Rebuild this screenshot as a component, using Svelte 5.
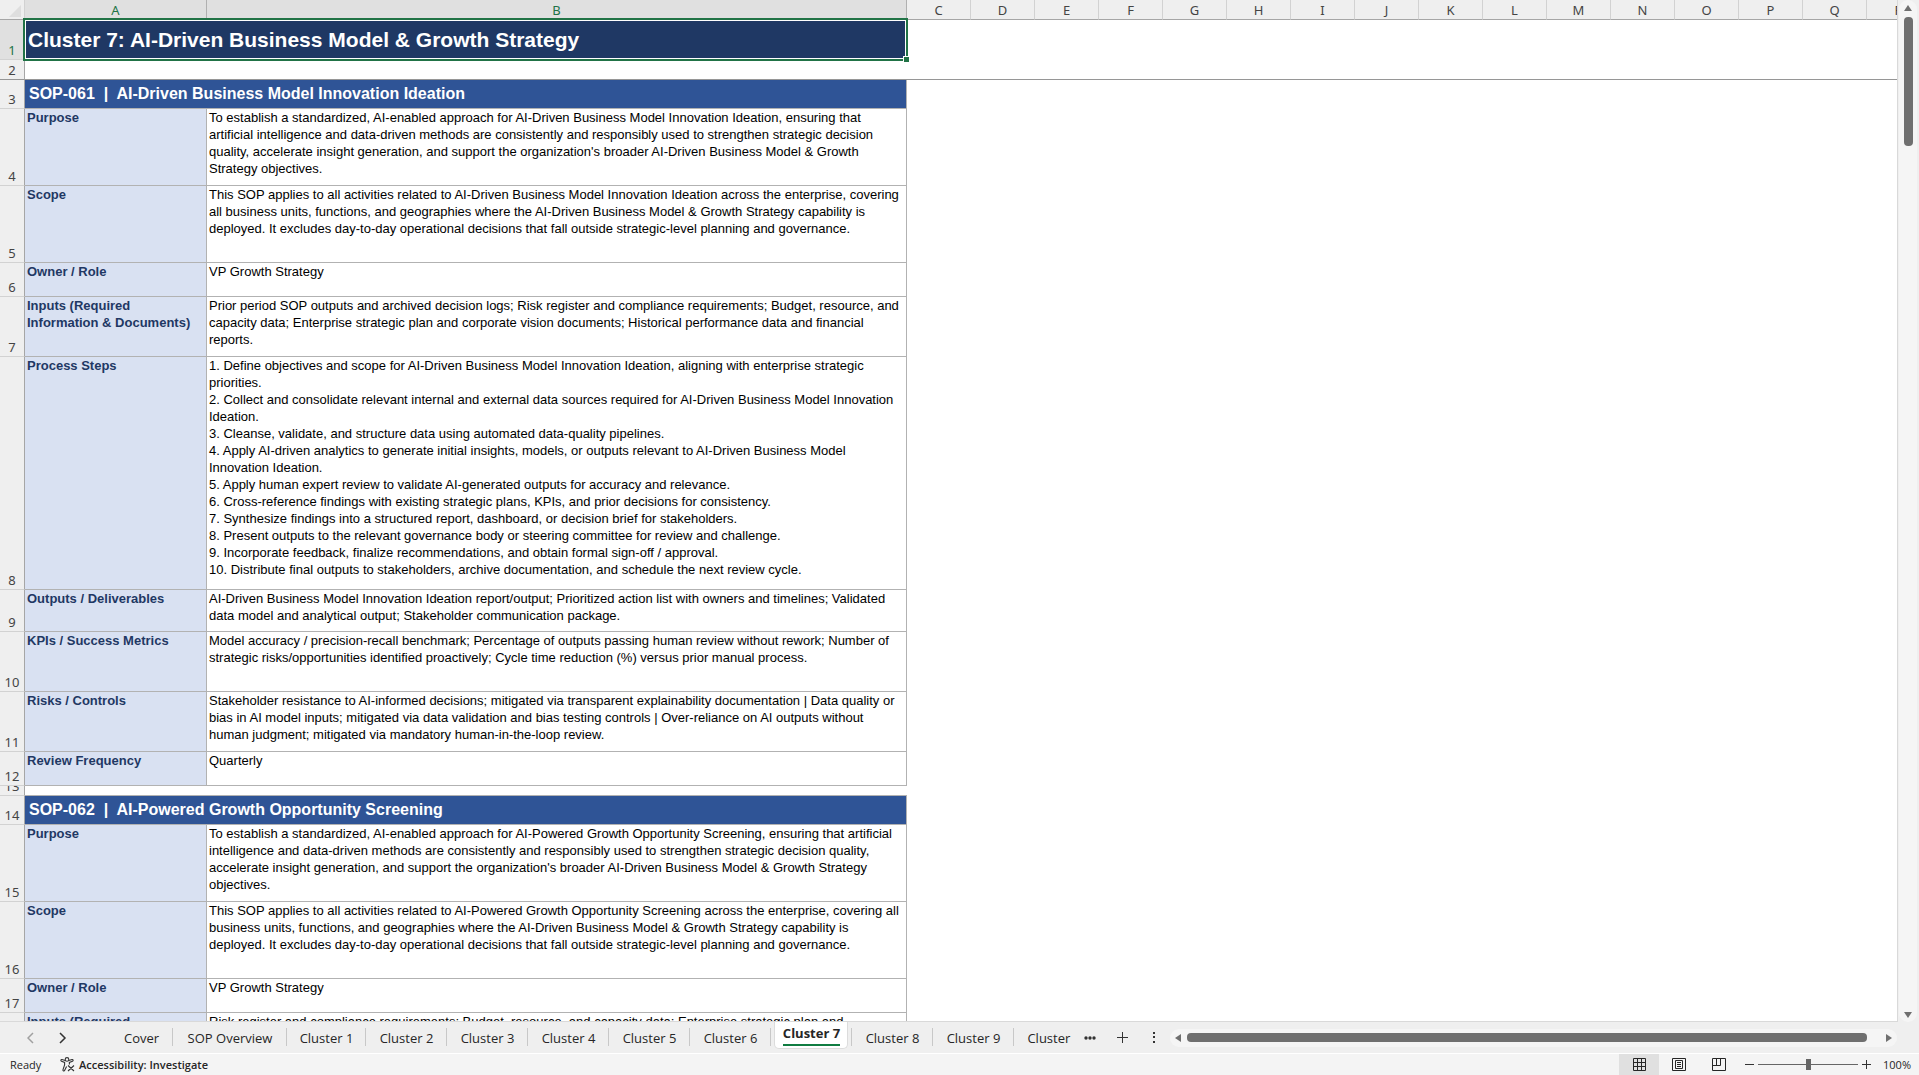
<script lang="ts">
	type Row = {
		n: number;
		height: number;
		kind: 'title' | 'blank' | 'section' | 'field';
		label?: string;
		text?: string;
	};

	const columns = 'CDEFGHIJKLMNOPQR'.split('');

	const frozen: Row[] = [
		{ n: 1, height: 40, kind: 'title', text: 'Cluster 7: AI-Driven Business Model & Growth Strategy' },
		{ n: 2, height: 20, kind: 'blank' }
	];

	const rows: Row[] = [
		{ n: 3, height: 29, kind: 'section', text: 'SOP-061  |  AI-Driven Business Model Innovation Ideation' },
		{
			n: 4,
			height: 77,
			kind: 'field',
			label: 'Purpose',
			text: `To establish a standardized, AI-enabled approach for AI-Driven Business Model Innovation Ideation, ensuring that
artificial intelligence and data-driven methods are consistently and responsibly used to strengthen strategic decision
quality, accelerate insight generation, and support the organization's broader AI-Driven Business Model & Growth
Strategy objectives.`
		},
		{
			n: 5,
			height: 77,
			kind: 'field',
			label: 'Scope',
			text: `This SOP applies to all activities related to AI-Driven Business Model Innovation Ideation across the enterprise, covering
all business units, functions, and geographies where the AI-Driven Business Model & Growth Strategy capability is
deployed. It excludes day-to-day operational decisions that fall outside strategic-level planning and governance.`
		},
		{ n: 6, height: 34, kind: 'field', label: 'Owner / Role', text: 'VP Growth Strategy' },
		{
			n: 7,
			height: 60,
			kind: 'field',
			label: 'Inputs (Required\nInformation & Documents)',
			text: `Prior period SOP outputs and archived decision logs; Risk register and compliance requirements; Budget, resource, and
capacity data; Enterprise strategic plan and corporate vision documents; Historical performance data and financial
reports.`
		},
		{
			n: 8,
			height: 233,
			kind: 'field',
			label: 'Process Steps',
			text: `1. Define objectives and scope for AI-Driven Business Model Innovation Ideation, aligning with enterprise strategic
priorities.
2. Collect and consolidate relevant internal and external data sources required for AI-Driven Business Model Innovation
Ideation.
3. Cleanse, validate, and structure data using automated data-quality pipelines.
4. Apply AI-driven analytics to generate initial insights, models, or outputs relevant to AI-Driven Business Model
Innovation Ideation.
5. Apply human expert review to validate AI-generated outputs for accuracy and relevance.
6. Cross-reference findings with existing strategic plans, KPIs, and prior decisions for consistency.
7. Synthesize findings into a structured report, dashboard, or decision brief for stakeholders.
8. Present outputs to the relevant governance body or steering committee for review and challenge.
9. Incorporate feedback, finalize recommendations, and obtain formal sign-off / approval.
10. Distribute final outputs to stakeholders, archive documentation, and schedule the next review cycle.`
		},
		{
			n: 9,
			height: 42,
			kind: 'field',
			label: 'Outputs / Deliverables',
			text: `AI-Driven Business Model Innovation Ideation report/output; Prioritized action list with owners and timelines; Validated
data model and analytical output; Stakeholder communication package.`
		},
		{
			n: 10,
			height: 60,
			kind: 'field',
			label: 'KPIs / Success Metrics',
			text: `Model accuracy / precision-recall benchmark; Percentage of outputs passing human review without rework; Number of
strategic risks/opportunities identified proactively; Cycle time reduction (%) versus prior manual process.`
		},
		{
			n: 11,
			height: 60,
			kind: 'field',
			label: 'Risks / Controls',
			text: `Stakeholder resistance to AI-informed decisions; mitigated via transparent explainability documentation | Data quality or
bias in AI model inputs; mitigated via data validation and bias testing controls | Over-reliance on AI outputs without
human judgment; mitigated via mandatory human-in-the-loop review.`
		},
		{ n: 12, height: 34, kind: 'field', label: 'Review Frequency', text: 'Quarterly' },
		{ n: 13, height: 10, kind: 'blank' },
		{ n: 14, height: 29, kind: 'section', text: 'SOP-062  |  AI-Powered Growth Opportunity Screening' },
		{
			n: 15,
			height: 77,
			kind: 'field',
			label: 'Purpose',
			text: `To establish a standardized, AI-enabled approach for AI-Powered Growth Opportunity Screening, ensuring that artificial
intelligence and data-driven methods are consistently and responsibly used to strengthen strategic decision quality,
accelerate insight generation, and support the organization's broader AI-Driven Business Model & Growth Strategy
objectives.`
		},
		{
			n: 16,
			height: 77,
			kind: 'field',
			label: 'Scope',
			text: `This SOP applies to all activities related to AI-Powered Growth Opportunity Screening across the enterprise, covering all
business units, functions, and geographies where the AI-Driven Business Model & Growth Strategy capability is
deployed. It excludes day-to-day operational decisions that fall outside strategic-level planning and governance.`
		},
		{ n: 17, height: 34, kind: 'field', label: 'Owner / Role', text: 'VP Growth Strategy' },
		{
			n: 18,
			height: 60,
			kind: 'field',
			label: 'Inputs (Required\nInformation & Documents)',
			text: 'Risk register and compliance requirements; Budget, resource, and capacity data; Enterprise strategic plan and'
		}
	];

	const tabs = [
		{ name: 'Cover', width: 63 },
		{ name: 'SOP Overview', width: 114 },
		{ name: 'Cluster 1', width: 79 },
		...[2, 3, 4, 5, 6, 7, 8, 9].map((i) => ({ name: `Cluster ${i}`, width: 81 })),
		{ name: 'Cluster 10', width: 88 }
	];

	let active = $state('Cluster 7');
	let view = $state('Normal');
	let zoom = $state(100);
</script>

{#snippet sheetRow(row: Row)}
	<tr class={row.kind} style:height="{row.height}px">
		<th class="rownum" class:selected={row.n === 1} scope="row">
			<div style:height="{row.height - 1}px">{row.n}</div>
		</th>
		{#if row.kind === 'field'}
			<td class="label">{row.label}</td>
			<td class="text">{row.text}</td>
		{:else}
			<td class="wide" colspan="2">{row.text ?? ''}{#if row.kind === 'title'}<span class="selection"></span>{/if}</td>
		{/if}
		<td colspan={columns.length}></td>
	</tr>
{/snippet}

<div class="app">
	<div class="work">
		<main class="grid">
			<table>
				<colgroup>
					<col class="w-num" />
					<col class="w-a" />
					<col class="w-b" />
					{#each columns as c (c)}<col class="w-c" />{/each}
				</colgroup>
				<thead>
					<tr>
						<th class="corner" aria-label="Select all">
							<svg width="12" height="12" viewBox="0 0 12 12"><path d="M12 0V12H0Z" fill="#dedede" /></svg>
						</th>
						<th class="selected" scope="col">A</th>
						<th class="selected" scope="col">B</th>
						{#each columns as c (c)}<th scope="col">{c}</th>{/each}
					</tr>
				</thead>
				<tbody class="frozen">
					{#each frozen as row (row.n)}{@render sheetRow(row)}{/each}
				</tbody>
				<tbody>
					{#each rows as row (row.n)}{@render sheetRow(row)}{/each}
				</tbody>
			</table>
		</main>
		<div class="vscroll">
			<button aria-label="Scroll up"><svg width="10" height="8"><path d="M5 1 9 7H1Z" /></svg></button>
			<div class="vthumb"></div>
			<button class="end" aria-label="Scroll down"><svg width="10" height="8"><path d="M1 1H9L5 7Z" /></svg></button>
		</div>
	</div>

	<div class="tabbar">
		<button class="arrow dim" aria-label="Previous sheet">
			<svg width="8" height="12"><path d="M6 1 1 6 6 11" /></svg>
		</button>
		<button class="arrow" aria-label="Next sheet">
			<svg width="8" height="12"><path d="M1 1 6 6 1 11" /></svg>
		</button>
		<nav class="tabs">
			{#each tabs as tab (tab.name)}
				<button
					class="tab"
					class:active={tab.name === active}
					style:width="{tab.width}px"
					onclick={() => (active = tab.name)}
				>
					<span>{tab.name}</span>
				</button>
			{/each}
		</nav>
		<button class="tool" aria-label="More sheets">
			<svg width="12" height="4"><circle cx="2" cy="2" r="1.7" /><circle cx="6" cy="2" r="1.7" /><circle cx="10" cy="2" r="1.7" /></svg>
		</button>
		<button class="tool" aria-label="New sheet">
			<svg width="11" height="11"><path d="M5 0H6V11H5ZM0 5H11V6H0Z" /></svg>
		</button>
		<button class="tool" aria-label="Resize tabs">
			<svg width="2" height="11"><path d="M0 0H2V2H0ZM0 4H2V6H0ZM0 9H2V11H0Z" /></svg>
		</button>
		<div class="hscroll">
			<button aria-label="Scroll left"><svg width="8" height="10"><path d="M7 1V9L1 5Z" /></svg></button>
			<div class="hthumb"></div>
			<button aria-label="Scroll right"><svg width="8" height="10"><path d="M1 1 7 5 1 9Z" /></svg></button>
		</div>
	</div>

	<footer class="status">
		<span class="ready">Ready</span>
		<button class="access">
			<svg width="15" height="15" viewBox="0 0 15 15" fill="none" stroke="#333" stroke-width="1.1">
				<circle cx="7" cy="2.4" r="1.8" />
				<path d="M5.2 3.6 2 2.5C.8 2.2.4 3.8 1.5 4.2L4.6 5.4V8L3 12.6C2.6 14 4.2 14.5 4.7 13.3L6.6 9.4M8.8 3.6 12 2.5C13.2 2.2 13.6 3.8 12.5 4.2L9.4 5.4V7.4M8 8.5 14 14M14 8.5 8 14" />
			</svg>
			<span>Accessibility: Investigate</span>
		</button>
		<div class="views">
			<button class:on={view === 'Normal'} aria-label="Normal" onclick={() => (view = 'Normal')}>
				<svg width="13" height="13"><path d="M.5.5H12.5V12.5H.5ZM4.5.5V12.5M8.5.5V12.5M.5 4.5H12.5M.5 8.5H12.5" /></svg>
			</button>
			<button class:on={view === 'Page Layout'} aria-label="Page Layout" onclick={() => (view = 'Page Layout')}>
				<svg width="14" height="13"><path d="M.5.5H13.5V12.5H.5ZM3.5 2.5H10.5V10.5H3.5ZM5 4.5H9M5 6.5H9M5 8.5H9" /></svg>
			</button>
			<button class:on={view === 'Page Break'} aria-label="Page Break Preview" onclick={() => (view = 'Page Break')}>
				<svg width="14" height="13"><path d="M.5.5H13.5V12.5H.5ZM.5 7.5H8.5V.5M4.5.5V7.5" /></svg>
			</button>
		</div>
		<button class="step" aria-label="Zoom out" onclick={() => (zoom -= 10)}>
			<svg width="9" height="9"><path d="M0 4H9V5H0Z" /></svg>
		</button>
		<input type="range" min="10" max="190" bind:value={zoom} aria-label="Zoom" />
		<button class="step" aria-label="Zoom in" onclick={() => (zoom += 10)}>
			<svg width="9" height="9"><path d="M4 0H5V9H4ZM0 4H9V5H0Z" /></svg>
		</button>
		<button class="percent">{zoom}%</button>
	</footer>
</div>

<style>
	:global(body) {
		margin: 0;
		overflow: hidden;
	}

	.app {
		display: flex;
		flex-direction: column;
		height: 100vh;
		background: #efefef;
		font-family: 'Open Sans', 'Noto Sans', sans-serif;
		font-size: 11px;
		color: #262626;
	}

	button {
		display: flex;
		align-items: center;
		justify-content: center;
		padding: 0;
		border: 0;
		background: none;
		font: inherit;
		color: inherit;
	}

	.work {
		display: flex;
		flex: 1;
		min-height: 0;
	}

	.grid {
		flex: 1;
		min-width: 0;
		overflow: hidden;
		background: #fff;
		border-right: 1px solid #d9d9d9;
		border-bottom: 1px solid #d9d9d9;
	}

	table {
		width: 0;
		table-layout: fixed;
		border-collapse: separate;
		border-spacing: 0;
	}

	.w-num {
		width: 25px;
	}

	.w-a {
		width: 182px;
	}

	.w-b {
		width: 700px;
	}

	.w-c {
		width: 64px;
	}

	th,
	td {
		box-sizing: border-box;
		padding: 0;
	}

	thead th {
		height: 20px;
		padding-top: 2px;
		border-right: 1px solid #d2d2d2;
		border-bottom: 1px solid #a6a6a6;
		background: #efefef;
		font-family: 'Noto Sans', sans-serif;
		font-size: 13px;
		font-weight: 400;
		line-height: 17px;
		color: #444;
	}

	thead th.selected {
		border-right-color: #b0b0b0;
		background: #e0e0e0;
		color: #217346;
	}

	thead th.corner {
		padding: 2px 3px 0 0;
		text-align: right;
		line-height: 0;
	}

	.rownum {
		border-right: 1px solid #a6a6a6;
		border-bottom: 1px solid #d2d2d2;
		background: #efefef;
		font-family: 'Noto Sans', sans-serif;
		font-size: 13px;
		font-weight: 400;
		line-height: 17px;
		color: #444;
	}

	.rownum.selected {
		background: #e0e0e0;
		color: #217346;
	}

	.rownum div {
		display: flex;
		align-items: flex-end;
		justify-content: center;
		overflow: hidden;
	}

	.frozen tr:last-child > * {
		border-bottom: 1px solid #969696;
	}

	td {
		vertical-align: top;
		font-family: 'Liberation Sans', Arial, sans-serif;
		font-size: 13px;
		line-height: 17px;
		color: #000;
	}

	.label,
	.text {
		padding-left: 2px;
		border-right: 1px solid #b2b2b2;
		border-bottom: 1px solid #b2b2b2;
		white-space: pre;
	}

	.label {
		background: #d9e1f2;
		font-weight: 700;
		color: #1f3864;
	}

	.wide {
		padding-bottom: 2px;
		vertical-align: middle;
		white-space: pre;
	}

	.blank .wide {
		padding: 0;
		border-bottom: 1px solid #b2b2b2;
	}

	.section .wide {
		padding-left: 4px;
		border-right: 1px solid #b2b2b2;
		border-bottom: 1px solid #b2b2b2;
		background: #2f5496;
		font-size: 16px;
		font-weight: 700;
		color: #fff;
	}

	.title .wide {
		position: relative;
		padding-left: 3px;
		background: #1f3864;
		font-size: 21px;
		font-weight: 700;
		color: #fff;
	}

	/* selection frame straddles the cell edges */
	.selection {
		position: absolute;
		inset: -2px -1px -1px -2px;
		border: 2px solid #217346;
		box-shadow: inset 0 0 0 1px #fff;
	}

	.selection::after {
		content: '';
		position: absolute;
		right: -4px;
		bottom: -4px;
		width: 5px;
		height: 5px;
		border: 1px solid #fff;
		background: #217346;
	}

	.vscroll {
		display: flex;
		flex-direction: column;
		align-items: center;
		width: 18px;
		margin: 0 2px 0 1px;
		padding: 4px 0 3px;
		box-sizing: border-box;
		border-radius: 9px;
		background: #f5f5f5;
		fill: #6f6f6f;
	}

	.vthumb {
		width: 9px;
		height: 129px;
		margin-top: 5px;
		border-radius: 4px;
		background: #6f6f6f;
	}

	.end {
		margin-top: auto;
	}

	.tabbar {
		display: flex;
		align-items: center;
		height: 31px;
		border-bottom: 1px solid #fff;
	}

	.arrow {
		width: 32px;
		fill: none;
		stroke: #333;
		stroke-width: 1.5;
	}

	.arrow.dim {
		margin-left: 15px;
		stroke: #a0a0a0;
	}

	.tabs {
		display: flex;
		align-self: stretch;
		flex: 0 1 964px;
		min-width: 0;
		margin-left: 31px;
		overflow: hidden;
	}

	.tab {
		position: relative;
		flex: none;
		font-size: 13px;
		line-height: 20px;
		white-space: nowrap;
	}

	.tab::after {
		content: '';
		position: absolute;
		right: 0;
		top: 6px;
		width: 1px;
		height: 18px;
		background: #c8c8c8;
	}

	.tab.active {
		align-items: flex-start;
		font-weight: 700;
	}

	.tab.active span {
		z-index: 1;
		border-bottom: 2px solid #107c41;
		line-height: 22px;
	}

	.tab.active::before {
		content: '';
		position: absolute;
		left: 3px;
		right: 4px;
		top: -1px;
		height: 27px;
		border: 1px solid #dcdcdc;
		border-top: 0;
		border-radius: 0 0 5px 5px;
		background: #fff;
	}

	.tool {
		width: 32px;
		height: 20px;
		fill: #333;
	}

	.hscroll {
		display: flex;
		align-items: center;
		flex: 1;
		height: 18px;
		margin-right: 22px;
		padding: 0 4px;
		border-radius: 9px;
		background: #f5f5f5;
		fill: #6f6f6f;
	}

	.hthumb {
		flex: 1;
		height: 9px;
		margin: 0 18px 0 5px;
		border-radius: 4px;
		background: #6f6f6f;
	}

	.status {
		display: flex;
		align-items: center;
		height: 21px;
		background: #f4f4f4;
	}

	.ready {
		width: 50px;
		padding-left: 10px;
	}

	.access {
		gap: 4px;
		font-weight: 600;
	}

	.views {
		display: flex;
		align-self: stretch;
		margin-left: auto;
	}

	.views button {
		width: 40px;
		fill: none;
		stroke: #262626;
	}

	.views button.on {
		background: #e0e0e0;
	}

	.step {
		width: 17px;
		fill: #333;
	}

	.views + .step {
		margin-left: 2px;
	}

	input {
		appearance: none;
		width: 100px;
		height: 11px;
		margin: 0;
		background: linear-gradient(#666, #666) center / 100% 1px no-repeat;
	}

	input::-webkit-slider-thumb {
		appearance: none;
		width: 5px;
		height: 11px;
		background: #666;
	}

	.percent {
		width: 44px;
	}
</style>
